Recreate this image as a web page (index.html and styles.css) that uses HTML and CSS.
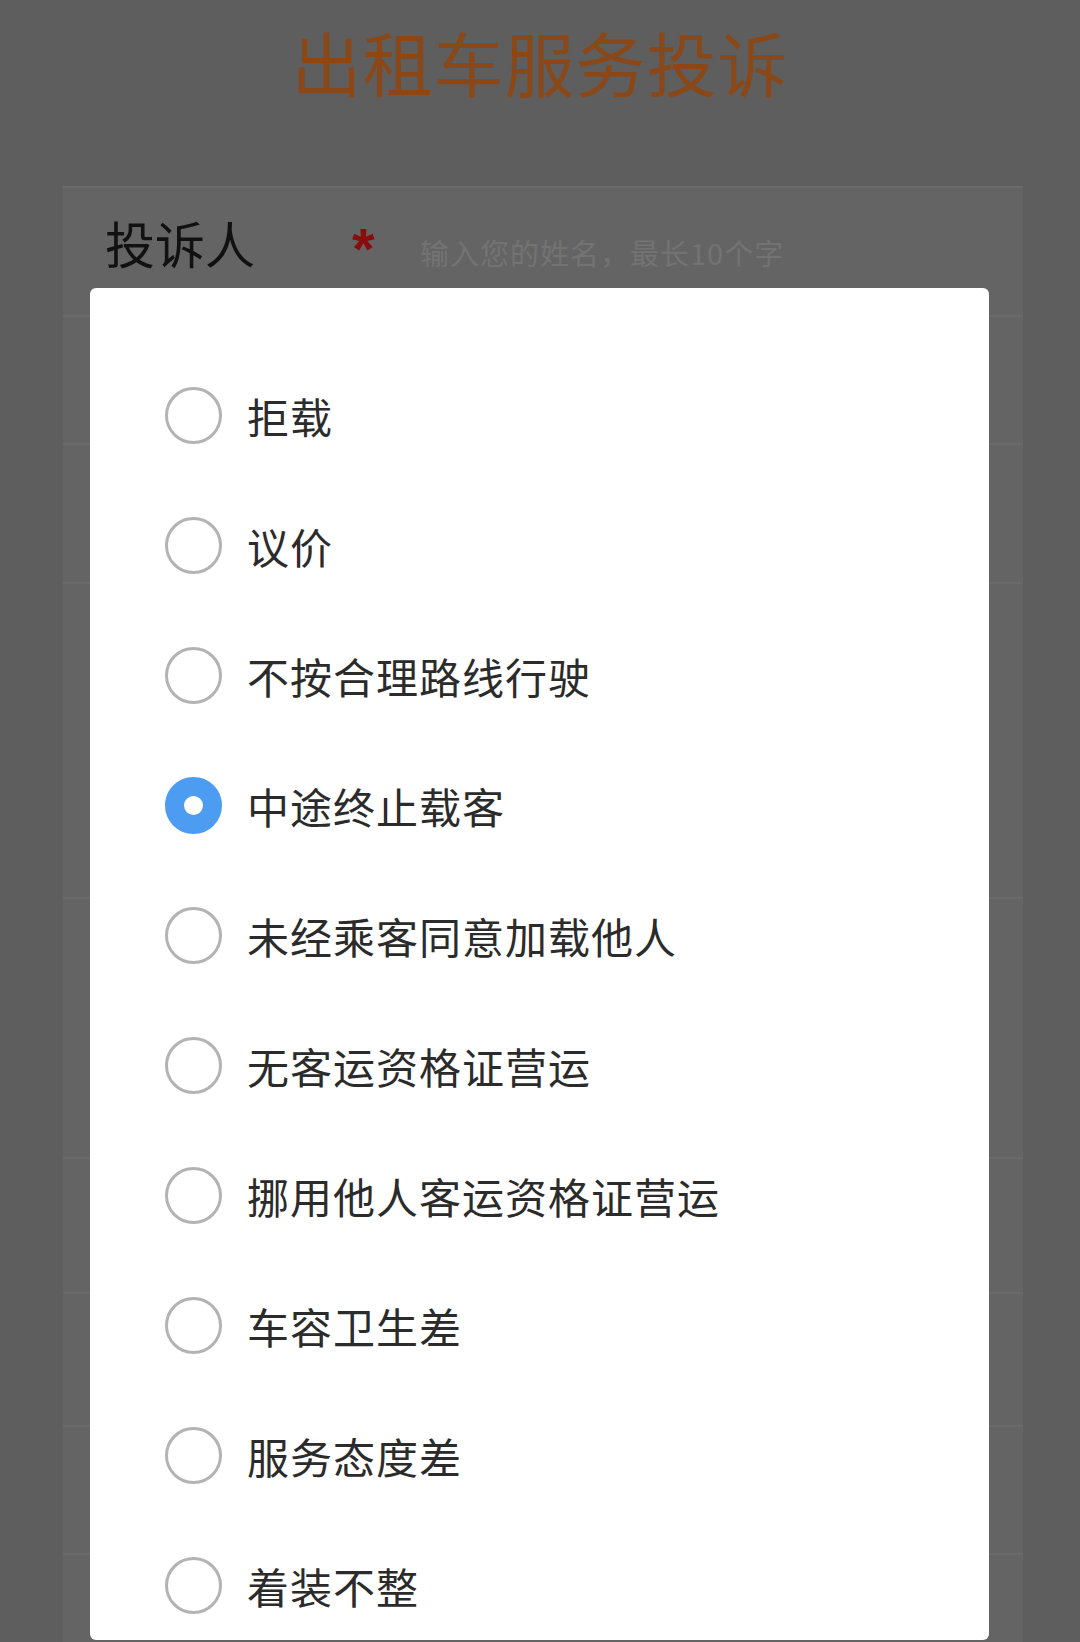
FILE: index.html
```html
<!DOCTYPE html>
<html lang="zh-CN">

<head>
    <meta charset="UTF-8">
    <meta name="viewport" content="width=device-width, initial-scale=1.0">
    <title>出租车服务投诉</title>
    <link rel="stylesheet" href="styles.css">
</head>

<body>

    <h1 class="title">出租车服务投诉</h1>

    <!-- Form card (dimmed behind the picker) -->
    <div class="card">
        <div class="row row-name">
            <span class="label">投诉人</span>
            <span class="required">*</span>
            <span class="placeholder">输入您的姓名，最长10个字</span>
        </div>
        <div class="row" style="height: 128px"></div>
        <div class="row" style="height: 139px"></div>
        <div class="row" style="height: 315px"></div>
        <div class="row" style="height: 260px"></div>
        <div class="row" style="height: 135px"></div>
        <div class="row" style="height: 133px"></div>
        <div class="row" style="height: 128px"></div>
        <div class="row last" style="height: 120px"></div>
    </div>

    <!-- Complaint type picker -->
    <div class="picker">
        <ul class="options">
            <li class="option"><span class="radio"></span>拒载</li>
            <li class="option"><span class="radio"></span>议价</li>
            <li class="option"><span class="radio"></span>不按合理路线行驶</li>
            <li class="option"><span class="radio checked"></span>中途终止载客</li>
            <li class="option"><span class="radio"></span>未经乘客同意加载他人</li>
            <li class="option"><span class="radio"></span>无客运资格证营运</li>
            <li class="option"><span class="radio"></span>挪用他人客运资格证营运</li>
            <li class="option"><span class="radio"></span>车容卫生差</li>
            <li class="option"><span class="radio"></span>服务态度差</li>
            <li class="option"><span class="radio"></span>着装不整</li>
        </ul>
    </div>

</body>

</html>
```

FILE: styles.css
```css
body {
    font-family: "Noto Sans CJK SC", "Noto Sans", sans-serif;
    margin: 0;
    padding: 0;
    background-color: #5e5e5e;
    overflow: hidden;
    height: 1642px;
}

.title {
    margin: 0;
    padding-top: 14px;
    height: 172px;
    text-align: center;
    font-size: 70px;
    font-weight: 400;
    line-height: 96px;
    color: #8a4818;
    letter-spacing: 1px;
}

.card {
    margin: 0 57px 0 63px;
    background-color: #646464;
    border-top: 2px solid #6a6a6a;
}

.row {
    border-bottom: 2px solid #6a6a6a;
    box-sizing: border-box;
}

.row.last {
    border-bottom: none;
}

.row-name {
    height: 129px;
    display: flex;
    align-items: flex-start;
    padding: 24px 0 0 42px;
}

.label {
    font-size: 50px;
    line-height: 60px;
    color: #111;
    width: 247px;
}

.required {
    font-family: "Liberation Sans", Arial, sans-serif;
    font-size: 58px;
    font-weight: 700;
    line-height: 58px;
    color: #8a0d0d;
    width: 68px;
    padding-top: 8px;
}

.placeholder {
    font-size: 29px;
    line-height: 40px;
    color: #737373;
    padding-top: 20px;
    letter-spacing: 1px;
}

.picker {
    position: fixed;
    left: 90px;
    width: 899px;
    top: 288px;
    bottom: 2px;
    background-color: #fff;
    border-radius: 6px;
}

.options {
    list-style: none;
    margin: 0;
    padding: 62px 0 0 75px;
}

.option {
    height: 130px;
    display: flex;
    align-items: center;
    font-size: 42px;
    letter-spacing: 1px;
    color: #2b2b2b;
}

.radio {
    width: 57px;
    height: 57px;
    box-sizing: border-box;
    border: 3px solid #b3b3b3;
    border-radius: 50%;
    margin-right: 25px;
    flex-shrink: 0;
}

.radio.checked {
    border: 19px solid #4c9cf2;
    background-color: #fff;
}
```
